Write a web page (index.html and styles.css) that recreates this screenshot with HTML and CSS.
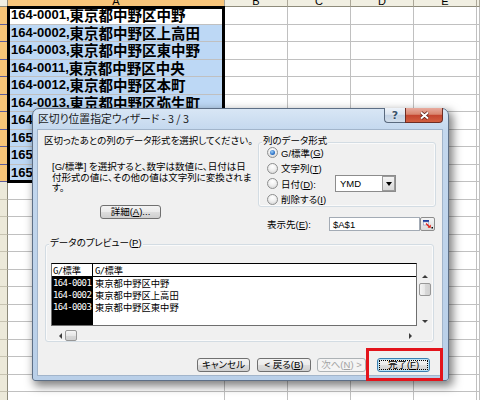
FILE: index.html
```html
<!DOCTYPE html>
<html lang="ja">
<head>
<meta charset="utf-8">
<title>区切り位置指定ウィザード</title>
<link rel="stylesheet" href="styles.css">
</head>
<body>
<div class="sheet">
  <div class="ch corner"></div><div class="ch sel"><span>A</span></div><div class="ch"><span>B</span></div><div class="ch"><span>C</span></div><div class="ch"><span>D</span></div><div class="ch"><span>E</span></div><div class="ch"></div>

  <div class="rh sel"></div><div class="c a active"><span class="num">164-0001,</span>東京都中野区中野</div><div class="c"></div><div class="c"></div><div class="c"></div><div class="c"></div><div class="c"></div>
  <div class="rh sel"></div><div class="c a sel"><span class="num">164-0002,</span>東京都中野区上高田</div><div class="c"></div><div class="c"></div><div class="c"></div><div class="c"></div><div class="c"></div>
  <div class="rh sel"></div><div class="c a sel"><span class="num">164-0003,</span>東京都中野区東中野</div><div class="c"></div><div class="c"></div><div class="c"></div><div class="c"></div><div class="c"></div>
  <div class="rh sel"></div><div class="c a sel"><span class="num">164-0011,</span>東京都中野区中央</div><div class="c"></div><div class="c"></div><div class="c"></div><div class="c"></div><div class="c"></div>
  <div class="rh sel"></div><div class="c a sel"><span class="num">164-0012,</span>東京都中野区本町</div><div class="c"></div><div class="c"></div><div class="c"></div><div class="c"></div><div class="c"></div>
  <div class="rh sel"></div><div class="c a sel"><span class="num">164-0013,</span>東京都中野区弥生町</div><div class="c"></div><div class="c"></div><div class="c"></div><div class="c"></div><div class="c"></div>
  <div class="rh sel"></div><div class="c a sel"><span class="num">164-0014,</span>東京都中野区南台</div><div class="c"></div><div class="c"></div><div class="c"></div><div class="c"></div><div class="c"></div>
  <div class="rh sel"></div><div class="c a sel"><span class="num">165-0021,</span>東京都中野区丸山</div><div class="c"></div><div class="c"></div><div class="c"></div><div class="c"></div><div class="c"></div>
  <div class="rh sel"></div><div class="c a sel"><span class="num">165-0022,</span>東京都中野区江古田</div><div class="c"></div><div class="c"></div><div class="c"></div><div class="c"></div><div class="c"></div>
  <div class="rh sel"></div><div class="c a sel"><span class="num">165-0023,</span>東京都中野区江原町</div><div class="c"></div><div class="c"></div><div class="c"></div><div class="c"></div><div class="c"></div>

  <div class="rh"></div><div class="c a"></div><div class="c"></div><div class="c"></div><div class="c"></div><div class="c"></div><div class="c"></div>
  <div class="rh"></div><div class="c a"></div><div class="c"></div><div class="c"></div><div class="c"></div><div class="c"></div><div class="c"></div>
  <div class="rh"></div><div class="c a"></div><div class="c"></div><div class="c"></div><div class="c"></div><div class="c"></div><div class="c"></div>
  <div class="rh"></div><div class="c a"></div><div class="c"></div><div class="c"></div><div class="c"></div><div class="c"></div><div class="c"></div>
  <div class="rh"></div><div class="c a"></div><div class="c"></div><div class="c"></div><div class="c"></div><div class="c"></div><div class="c"></div>
  <div class="rh"></div><div class="c a"></div><div class="c"></div><div class="c"></div><div class="c"></div><div class="c"></div><div class="c"></div>
  <div class="rh"></div><div class="c a"></div><div class="c"></div><div class="c"></div><div class="c"></div><div class="c"></div><div class="c"></div>
  <div class="rh"></div><div class="c a"></div><div class="c"></div><div class="c"></div><div class="c"></div><div class="c"></div><div class="c"></div>
  <div class="rh"></div><div class="c a"></div><div class="c"></div><div class="c"></div><div class="c"></div><div class="c"></div><div class="c"></div>
  <div class="rh"></div><div class="c a"></div><div class="c"></div><div class="c"></div><div class="c"></div><div class="c"></div><div class="c"></div>
  <div class="rh"></div><div class="c a"></div><div class="c"></div><div class="c"></div><div class="c"></div><div class="c"></div><div class="c"></div>
  <div class="rh"></div><div class="c a"></div><div class="c"></div><div class="c"></div><div class="c"></div><div class="c"></div><div class="c"></div>
  <div class="rh"></div><div class="c a"></div><div class="c"></div><div class="c"></div><div class="c"></div><div class="c"></div><div class="c"></div>
</div>
<div class="selection"></div>

<div class="dialog">
  <div class="titlebar">
    <span class="title">区切り位置指定ウィザード - 3 / 3</span>
    <div class="caption">
      <span class="cb help">?</span>
      <span class="cb close"><svg width="11" height="9" viewBox="0 0 11 9"><path d="M2 1.5L9 7.5M9 1.5L2 7.5" stroke="#5b1f17" stroke-width="3.6"/><path d="M2 1.5L9 7.5M9 1.5L2 7.5" stroke="#fff" stroke-width="2"/></svg></span>
    </div>
  </div>
  <div class="client">
    <div class="top">
      <div class="left">
        <p class="p1">区切ったあとの列のデータ形式を選択してください。</p>
        <p class="p2"><span>[G/標準] を選択すると、数字は数値に、日付は日</span><span>付形式の値に、その他の値は文字列に変換されま</span><span>す。</span></p>
        <div class="btn detail">詳細(<u>A</u>)...</div>
      </div>
      <div class="right">
        <div class="group fmt">
          <span class="legend">列のデータ形式</span>
          <div class="radio on"><i class="rb"></i>G/標準(<u>G</u>)</div>
          <div class="radio"><i class="rb"></i>文字列(<u>T</u>)</div>
          <div class="radio"><i class="rb"></i><span class="lbl-d">日付(<u>D</u>):</span><span class="select">YMD<span class="dd"><i></i></span></span></div>
          <div class="radio"><i class="rb"></i>削除する(<u>I</u>)</div>
        </div>
        <div class="dest">
          <span class="lbl">表示先(<u>E</u>):</span>
          <span class="input">$A$1</span>
          <span class="refbtn"><svg width="15" height="14" viewBox="0 0 15 14"><defs><linearGradient id="rg" x1="0" y1="0" x2="0" y2="1"><stop offset="0" stop-color="#f6f6f6"/><stop offset="1" stop-color="#d9d9d9"/></linearGradient></defs><rect x="0.5" y="0.5" width="14" height="13" rx="1.5" fill="url(#rg)" stroke="#8d8d8d"/><rect x="3" y="3" width="6" height="2" fill="#1f3d9e"/><rect x="3.3" y="5" width="5.4" height="3" fill="#fff" stroke="#8593b8" stroke-width=".6"/><path d="M6 6.5L9.6 10" stroke="#e2231a" stroke-width="1.5"/><path d="M10.8 10.8L7.6 10.8L10.8 7.6Z" fill="#e2231a"/><rect x="11.5" y="10" width="1.5" height="1.5" fill="#000"/></svg></span>
        </div>
      </div>
    </div>

    <div class="group pv">
      <span class="legend">データのプレビュー(<u>P</u>)</span>
      <div class="pvgrid">
        <div class="pbox">
          <div class="ph c1"><span class="m">G/</span>標準</div>
          <div class="ph c2"><span class="m">G/</span>標準</div>
          <div class="pd c1"><span class="m">164-0001</span><span class="m">164-0002</span><span class="m">164-0003</span></div>
          <div class="pd c2"><span>東京都中野区中野</span><span>東京都中野区上高田</span><span>東京都中野区東中野</span></div>
        </div>
        <div class="vscroll">
          <span class="sb-btn"><i class="tri up"></i></span>
          <span class="thumb v"></span>
          <span class="sb-fill"></span>
          <span class="sb-btn dn"><i class="tri down"></i></span>
        </div>
        <div class="hscroll">
          <span class="sb-btn h"><i class="tri left"></i></span>
          <span class="thumb h"></span>
          <span class="sb-fill"></span>
          <span class="sb-btn h"><i class="tri right"></i></span>
        </div>
      </div>
    </div>

    <div class="btns">
      <div class="btn cancel">キャンセル</div>
      <div class="btn back">&lt; 戻る(<u>B</u>)</div>
      <div class="btn next disabled">次へ(<u>N</u>) &gt;</div>
      <div class="btn finish">完了(<u>F</u>)</div>
    </div>
  </div>
</div>

<div class="callout"></div>
</body>
</html>
```

FILE: styles.css
```css
* { box-sizing: border-box; }

html, body { margin: 0; padding: 0; }

body {
  width: 480px;
  height: 400px;
  overflow: hidden;
  position: relative;
  background: #fff;
  font-family: "Liberation Sans", "Noto Sans CJK JP", sans-serif;
}

/* ---------- spreadsheet ---------- */
.sheet {
  display: grid;
  grid-template-columns: 8px 217px 63px 63px 63px 63px 3px;
  grid-template-rows: 7px;
  grid-auto-rows: 17.5px;
}

.ch {
  background: #f1efe2;
  border-right: 1px solid #aca899;
  border-bottom: 1px solid #8e8b7b;
  overflow: hidden;
  text-align: center;
  font-size: 11px;
  color: #000;
}
.ch span { display: block; line-height: 13px; margin-top: -5px; }
.ch.sel { background: #f8c57a; border-bottom-color: #8a6a36; }
.ch.corner { border-right-color: #8d8a7a; }

.rh {
  background: #ece9d9;
  border-right: 1px solid #8d8a7a;
  border-bottom: 1px solid #c7c3b1;
}
.rh.sel {
  background: #f8c577;
  border-bottom-color: #5d5d9c;
  border-right-color: #34346e;
}

.c {
  border-right: 1px solid #c0c0c0;
  border-bottom: 1px solid #c0c0c0;
}
.c.a {
  display: flex;
  align-items: center;
  padding-left: 3px;
  white-space: nowrap;
  overflow: hidden;
  font-family: "Noto Sans CJK JP", sans-serif;
  font-weight: 700;
  font-size: 14.5px;
  line-height: 16px;
  color: #000;
}
.c.a.sel { background: #bdd8f5; }
.c.a.active { background: #fff; }
.num { font-family: "Liberation Sans", sans-serif; font-size: 13px; }

.selection {
  position: absolute;
  left: 7px;
  top: 6px;
  width: 218px;
  height: 177px;
  border: 3px solid #000;
}

/* ---------- dialog ---------- */
.dialog {
  position: absolute;
  left: 32px;
  top: 108px;
  width: 417px;
  height: 273px;
  border: 1px solid #5d6f86;
  border-radius: 7px 7px 3px 3px;
  background: linear-gradient(180deg, #d8e6f5 0, #c4d8ee 21px, #b9cfe8 100%);
  box-shadow: 3px 4px 10px 1px rgba(0, 0, 0, .5);
  padding: 0 6px 5px 5px;
  display: flex;
  flex-direction: column;
  font-family: "Liberation Sans", "Noto Sans CJK JP", sans-serif;
  font-size: 9.5px;
  font-feature-settings: "palt";
  color: #000;
}

.titlebar {
  height: 21px;
  display: flex;
  align-items: flex-start;
  flex: none;
}
.title {
  font-family: "Noto Sans CJK JP", sans-serif;
  font-size: 10.8px;
  line-height: 18px;
  color: #1c1c1c;
  white-space: nowrap;
}
.caption {
  margin-left: auto;
  margin-top: -1px;
  margin-right: -1px;
  display: flex;
  height: 15px;
}
.cb {
  height: 15px;
  border: 1px solid #5a6a7e;
  border-top: none;
  display: flex;
  align-items: center;
  justify-content: center;
}
.help {
  width: 21px;
  border-right: none;
  border-radius: 0 0 0 4px;
  background: linear-gradient(180deg, #eef3f9 0, #dce5f0 45%, #c3d2e4 52%, #d2deeb 100%);
  font: 700 11px "DejaVu Sans", sans-serif;
  color: #3a526b;
  text-shadow: 0 0 2px #fff;
}
.close {
  width: 38px;
  border-color: #6e2d24;
  border-radius: 0 0 4px 0;
  background: linear-gradient(180deg, #e8ab9f 0, #d9866f 45%, #c4452f 52%, #d25f40 100%);
}

.client {
  flex: 1;
  background: #f0f0f0;
  box-shadow: 0 0 0 1px #a2b5cb;
}

.top { display: flex; height: 101px; }
.left { width: 220px; padding-left: 6px; }
.right { width: 178px; }

.p1 {
  margin: 5px 0 0;
  line-height: 12px;
  white-space: nowrap;
}
.p2 {
  margin: 15px 0 0;
  padding-left: 8px;
  line-height: 10.5px;
}
.p2 span { display: block; white-space: nowrap; }

.btn {
  height: 14px;
  border: 1px solid #707070;
  border-radius: 3px;
  background: linear-gradient(180deg, #f3f3f3 0, #ebebeb 48%, #dddddd 52%, #cfcfcf 100%);
  display: flex;
  align-items: center;
  justify-content: center;
  white-space: nowrap;
  line-height: 12px;
}
.detail { width: 61px; margin: 11px 0 0 56px; }

.group {
  position: relative;
  border: 1px solid #d3dce3;
  border-radius: 3px;
  box-shadow: inset 0 0 0 1px #fafafa;
}
.legend {
  position: absolute;
  top: -8px;
  left: 3px;
  padding: 0 1px;
  background: #f0f0f0;
  line-height: 12px;
  white-space: nowrap;
}

.fmt {
  margin-top: 12px;
  height: 65px;
  padding: 2px 0 0 8px;
}
.radio {
  height: 15.5px;
  display: flex;
  align-items: center;
  white-space: nowrap;
}
.rb {
  position: relative;
  flex: none;
  width: 11px;
  height: 11px;
  margin-right: 3px;
  border-radius: 50%;
  border: 1px solid #8e8f8f;
  background: radial-gradient(circle at 50% 30%, #ffffff 0, #f0f0f0 45%, #cfcfcf 100%);
}
.radio.on .rb::after {
  content: "";
  position: absolute;
  left: 2px;
  top: 2px;
  width: 5px;
  height: 5px;
  border-radius: 50%;
  background: radial-gradient(circle at 40% 35%, #9fd0f7 0, #2c72c8 60%, #1a4c93 100%);
}
.lbl-d { width: 54px; }
.select {
  width: 61px;
  height: 17px;
  border: 1px solid #8c8c8c;
  background: #fff;
  display: flex;
  align-items: center;
  padding-left: 4px;
}
.dd {
  margin-left: auto;
  width: 13px;
  height: 15px;
  border: 1px solid #9a9a9a;
  background: linear-gradient(180deg, #f4f4f4, #d8d8d8);
  display: flex;
  align-items: center;
  justify-content: center;
}
.dd i {
  width: 0;
  height: 0;
  border-left: 3.5px solid transparent;
  border-right: 3.5px solid transparent;
  border-top: 4px solid #000;
}

.dest {
  margin-top: 10px;
  height: 14px;
  display: flex;
  align-items: center;
  padding-left: 9px;
}
.dest .lbl { width: 62px; white-space: nowrap; }
.input {
  width: 91px;
  height: 14px;
  border: 1px solid #a3abb5;
  background: #fff;
  padding-left: 3px;
  display: flex;
  align-items: center;
}
.refbtn { width: 15px; height: 14px; display: block; }
.refbtn svg { display: block; }

/* preview */
.pv {
  margin: 13px 0 0 7px;
  width: 389px;
  height: 98px;
  padding: 18px 0 0 5px;
}
.pvgrid {
  display: grid;
  grid-template-columns: 366px 14px;
  grid-template-rows: 63px 11px;
  column-gap: 1px;
  row-gap: 4px;
}
.pbox {
  border: 1px solid #6e6e6e;
  border-top-color: #000;
  background: #fff;
  display: grid;
  grid-template-columns: 41px 1fr;
  grid-template-rows: 13px 1fr;
  font-family: "Noto Sans CJK JP", sans-serif;
  font-size: 9.3px;
  font-feature-settings: normal;
  overflow: hidden;
}
.ph {
  line-height: 12px;
  border-bottom: 1px solid #000;
  padding-left: 1px;
  white-space: nowrap;
}
.ph.c1 { border-right: 1px solid #000; }
.ph.c2 { padding-left: 2px; }
.pd { line-height: 12px; white-space: nowrap; }
.pd span { display: block; }
.pd.c1 { background: #000; color: #fff; padding-left: 1px; }
.pd.c2 { padding-left: 2px; }
.m {
  font-family: "DejaVu Sans Mono", monospace;
  font-size: 9px;
  letter-spacing: -0.65px;
}

.vscroll {
  align-self: end;
  height: 56px;
  display: flex;
  flex-direction: column;
  align-items: center;
}
.hscroll {
  display: flex;
  align-items: center;
}
.sb-btn {
  flex: none;
  width: 14px;
  height: 12px;
  display: flex;
  align-items: center;
  justify-content: center;
}
.sb-btn.dn { height: 10px; }
.sb-btn.h { width: 13px; height: 11px; }
.sb-fill { flex: 1; }
.thumb {
  flex: none;
  border: 1px solid #979797;
  border-radius: 2px;
}
.thumb.v {
  width: 12px;
  height: 13px;
  margin-top: 1px;
  background: linear-gradient(90deg, #f4f4f4 0, #e6e6e6 50%, #d8d8d8 52%, #d0d0d0 100%);
}
.thumb.h {
  width: 12px;
  height: 11px;
  margin-left: 1px;
  background: linear-gradient(180deg, #f4f4f4 0, #e6e6e6 50%, #d8d8d8 52%, #d0d0d0 100%);
}
.tri { width: 0; height: 0; }
.tri.up { border-left: 3px solid transparent; border-right: 3px solid transparent; border-bottom: 3px solid #3c3c3c; }
.tri.down { border-left: 3px solid transparent; border-right: 3px solid transparent; border-top: 3px solid #3c3c3c; }
.tri.left { border-top: 3px solid transparent; border-bottom: 3px solid transparent; border-right: 3px solid #3c3c3c; }
.tri.right { border-top: 3px solid transparent; border-bottom: 3px solid transparent; border-left: 3px solid #3c3c3c; }

/* bottom buttons */
.btns {
  margin-top: 16px;
  height: 14px;
  display: flex;
  justify-content: flex-end;
  padding-right: 12px;
}
.cancel { width: 53px; }
.back { width: 54px; margin-left: 7px; }
.next { width: 49px; margin-left: 6px; }
.finish {
  width: 53px;
  margin-left: 11px;
  border-color: #3c7fb1;
  box-shadow: inset 0 0 0 1px #b9e2f7;
  outline: 1px dotted #000;
  outline-offset: -3px;
}
.disabled {
  color: #a3a3a3;
  border-color: #adb2b5;
  background: #f4f4f4;
}

.callout {
  position: absolute;
  left: 366px;
  top: 348px;
  width: 77px;
  height: 33px;
  border: 3px solid #e3141c;
}
```
